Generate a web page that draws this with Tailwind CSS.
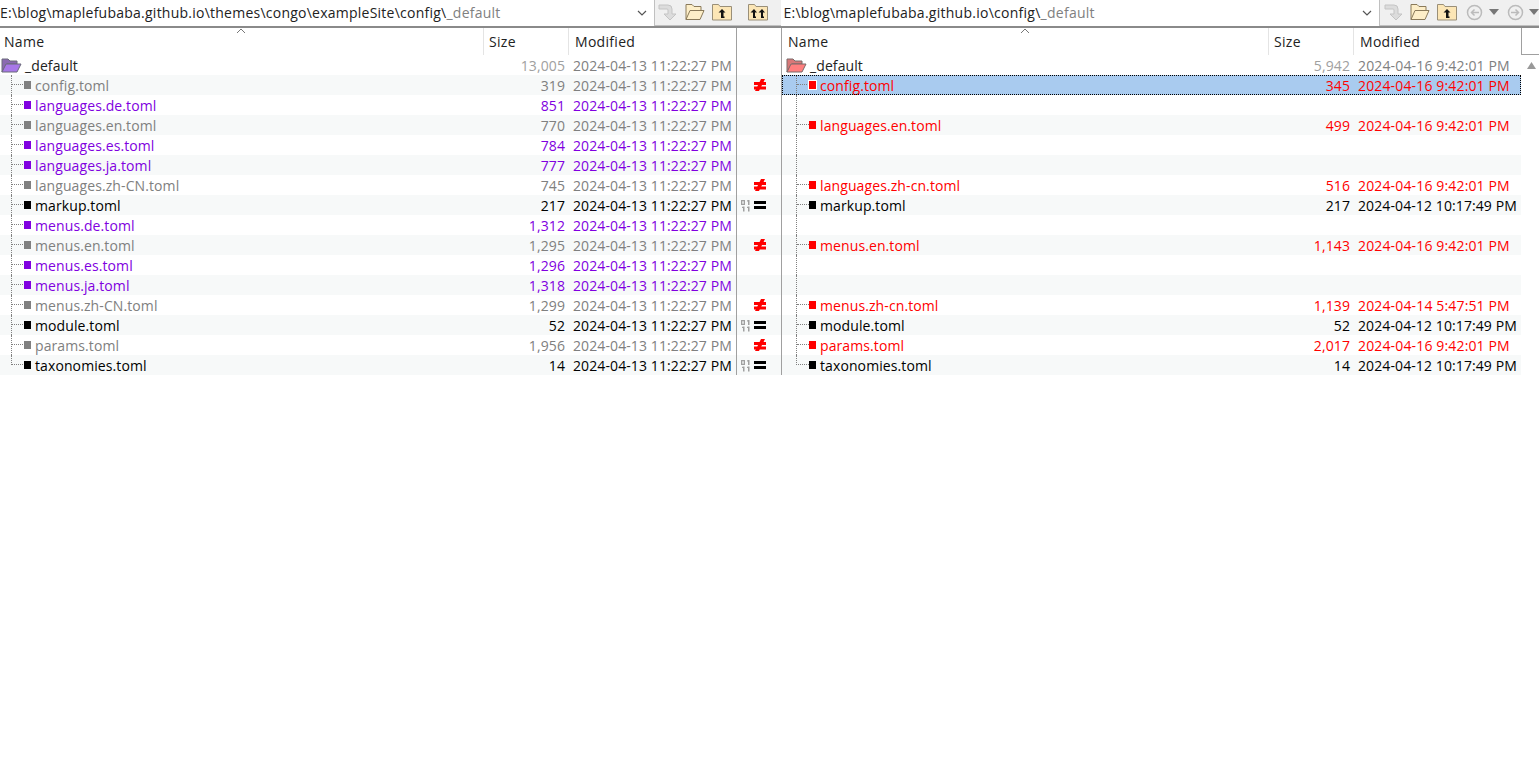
<!DOCTYPE html>
<html><head><meta charset="utf-8"><script src="https://cdn.jsdelivr.net/npm/@tailwindcss/browser@4"></script></head>
<body class="bg-white overflow-hidden">
<div class="w-[1539px] h-[763px] flex flex-col bg-white font-['Open_Sans','Noto_Sans',sans-serif] text-[14px] tracking-[0.1px] text-black">
  <!-- top bar -->
  <div class="flex h-[28px] bg-[#f0f0f0] border-b-2 border-[#8a8a8a] shrink-0">
    <div class="w-[655px] bg-white border-r border-[#c0c0c0] flex items-center justify-between pr-[7px] pb-px h-[26px]"><span class="text-[#222] tracking-[0.24px]">E:\blog\maplefubaba.github.io\themes\congo\exampleSite\config\<span class="text-[#808080]">_default</span></span>
      <svg width="10" height="6" viewBox="0 0 10 6"><path d="M1 1l4 4 4-4" fill="none" stroke="#555" stroke-width="1.2"/></svg></div>
    <div class="w-[127px] flex items-center pl-[3px] pb-px h-[26px] border-b border-[#c0c0c0]">
      <svg width="20" height="20" viewBox="0 0 20 20"><path d="M1 3h9a4 4 0 0 1 4 4v5h4l-6 6-6-6h4V8a1 1 0 0 0-1-1H1z" fill="#dcdcdc" stroke="#c4c4c4"/></svg>
      <svg class="ml-[7px]" width="20" height="18" viewBox="0 0 20 18"><path d="M1 16.500V1.500h6l2 2h7v4H5L1 16.500zm0 0h14l4-9H5" fill="#fdeec8" stroke="#8a7a5a"/></svg>
      <svg class="ml-[7px]" width="20" height="18" viewBox="0 0 20 18"><path d="M.5 17V1.500h6l1.500 2h11.500V17z" fill="#fce6b6" stroke="#9a8f78"/><path d="M10 6l-3.500 3.500H9V15h3.500v-1.500H11.500V9.500h2z" fill="#111"/></svg>
      <svg class="ml-[16px]" width="20" height="18" viewBox="0 0 20 18"><path d="M.5 17V1.500h6l1.500 2h11.500V17z" fill="#fce6b6" stroke="#9a8f78"/><path d="M6 6L2.500 9.500H5V15h3v-1.500H7V9.500h2zM14 6l-3.500 3.500H13V15h3v-1.500h-1V9.500h2z" fill="#111"/></svg>
    </div>
    <div class="w-[599px] bg-white border-r border-[#c0c0c0] flex items-center justify-between pl-[2px] pr-[7px] pb-px h-[26px]"><span class="text-[#222] tracking-[0.26px]">E:\blog\maplefubaba.github.io\config\<span class="text-[#808080]">_default</span></span>
      <svg width="10" height="6" viewBox="0 0 10 6"><path d="M1 1l4 4 4-4" fill="none" stroke="#555" stroke-width="1.2"/></svg></div>
    <div class="flex-1 flex items-center pl-[4px] pb-px h-[26px] border-b border-[#c0c0c0]">
      <svg width="20" height="20" viewBox="0 0 20 20"><path d="M1 3h9a4 4 0 0 1 4 4v5h4l-6 6-6-6h4V8a1 1 0 0 0-1-1H1z" fill="#dcdcdc" stroke="#c4c4c4"/></svg>
      <svg class="ml-[6px]" width="20" height="18" viewBox="0 0 20 18"><path d="M1 16.500V1.500h6l2 2h7v4H5L1 16.500zm0 0h14l4-9H5" fill="#fdeec8" stroke="#8a7a5a"/></svg>
      <svg class="ml-[7px]" width="20" height="18" viewBox="0 0 20 18"><path d="M.5 17V1.500h6l1.500 2h11.500V17z" fill="#fce6b6" stroke="#9a8f78"/><path d="M10 6l-3.500 3.500H9V15h3.500v-1.500H11.500V9.500h2z" fill="#111"/></svg>
      <svg class="ml-[9px]" width="17" height="17" viewBox="0 0 17 17"><circle cx="8.500" cy="8.500" r="7" fill="none" stroke="#bbb" stroke-width="1.500"/><path d="M13 8.500H6M8.500 5.500l-3 3 3 3" fill="none" stroke="#bbb" stroke-width="1.500"/></svg>
      <svg class="ml-[6px]" width="10" height="6" viewBox="0 0 10 6"><path d="M0 0h10L5 6z" fill="#777"/></svg>
      <svg class="ml-[8px]" width="17" height="17" viewBox="0 0 17 17"><circle cx="8.500" cy="8.500" r="7" fill="none" stroke="#bbb" stroke-width="1.500"/><path d="M4 8.500h7M8.500 5.500l3 3-3 3" fill="none" stroke="#bbb" stroke-width="1.500"/></svg>
      <svg class="ml-[5px] shrink-0" width="10" height="6" viewBox="0 0 10 6"><path d="M0 0h10L5 6z" fill="#777"/></svg>
    </div>
  </div>
  <div class="flex">
    <!-- left pane -->
    <div class="w-[737px] border-r border-[#a0a0a0] shrink-0">
      <div class="relative flex h-[27px] items-center text-[#222] tracking-[0.3px]">
        <span class="w-[484px] pl-[4px] border-r border-[#e4e4e4] h-full flex items-center">Name</span>
        <span class="w-[85px] pl-[5px] border-r border-[#e4e4e4] h-full flex items-center">Size</span>
        <span class="pl-[6px]">Modified</span>
        <svg class="absolute left-[236px] top-0" width="10" height="6" viewBox="0 0 10 6"><path d="M1 5l4-4 4 4" fill="none" stroke="#777"/></svg>
      </div>
      <div class="flex h-5 items-center text-[#222]"><svg class="ml-[1px] mr-[3px]" width="21" height="16" viewBox="0 0 21 16"><path d="M1 15V2h6l2 2h7v3H6z" fill="#8a6ab0" stroke="#6a6a7a"/><path d="M1 15l4-8h15l-4 8z" fill="#a878e8" stroke="#6a6a7a"/></svg><span class="flex-1">_default</span><span class="w-[60px] text-right text-[#a0a0a0]">13,005</span><span class="ml-2 w-[163px] text-[#808080]">2024-04-13 11:22:27 PM</span></div>
      <div class="flex h-5 items-center bg-[#f7f9f9] text-[#808080]"><span class="ml-[11px] w-[12px] h-5 border-l border-dotted border-[#808080]"><span class="block h-[10px] border-b border-dotted border-[#808080]"></span></span><span class="ml-px w-[7px] h-2 bg-[#808080]"></span><span class="ml-[4px] flex-1">config.toml</span><span class="w-[60px] text-right">319</span><span class="ml-2 w-[163px]">2024-04-13 11:22:27 PM</span></div>
      <div class="flex h-5 items-center text-[#8000e0]"><span class="ml-[11px] w-[12px] h-5 border-l border-dotted border-[#808080]"><span class="block h-[10px] border-b border-dotted border-[#808080]"></span></span><span class="ml-px w-[7px] h-2 bg-[#8000e0]"></span><span class="ml-[4px] flex-1">languages.de.toml</span><span class="w-[60px] text-right">851</span><span class="ml-2 w-[163px]">2024-04-13 11:22:27 PM</span></div>
      <div class="flex h-5 items-center bg-[#f7f9f9] text-[#808080]"><span class="ml-[11px] w-[12px] h-5 border-l border-dotted border-[#808080]"><span class="block h-[10px] border-b border-dotted border-[#808080]"></span></span><span class="ml-px w-[7px] h-2 bg-[#808080]"></span><span class="ml-[4px] flex-1">languages.en.toml</span><span class="w-[60px] text-right">770</span><span class="ml-2 w-[163px]">2024-04-13 11:22:27 PM</span></div>
      <div class="flex h-5 items-center text-[#8000e0]"><span class="ml-[11px] w-[12px] h-5 border-l border-dotted border-[#808080]"><span class="block h-[10px] border-b border-dotted border-[#808080]"></span></span><span class="ml-px w-[7px] h-2 bg-[#8000e0]"></span><span class="ml-[4px] flex-1">languages.es.toml</span><span class="w-[60px] text-right">784</span><span class="ml-2 w-[163px]">2024-04-13 11:22:27 PM</span></div>
      <div class="flex h-5 items-center bg-[#f7f9f9] text-[#8000e0]"><span class="ml-[11px] w-[12px] h-5 border-l border-dotted border-[#808080]"><span class="block h-[10px] border-b border-dotted border-[#808080]"></span></span><span class="ml-px w-[7px] h-2 bg-[#8000e0]"></span><span class="ml-[4px] flex-1">languages.ja.toml</span><span class="w-[60px] text-right">777</span><span class="ml-2 w-[163px]">2024-04-13 11:22:27 PM</span></div>
      <div class="flex h-5 items-center text-[#808080]"><span class="ml-[11px] w-[12px] h-5 border-l border-dotted border-[#808080]"><span class="block h-[10px] border-b border-dotted border-[#808080]"></span></span><span class="ml-px w-[7px] h-2 bg-[#808080]"></span><span class="ml-[4px] flex-1">languages.zh-CN.toml</span><span class="w-[60px] text-right">745</span><span class="ml-2 w-[163px]">2024-04-13 11:22:27 PM</span></div>
      <div class="flex h-5 items-center bg-[#f7f9f9] text-black"><span class="ml-[11px] w-[12px] h-5 border-l border-dotted border-[#808080]"><span class="block h-[10px] border-b border-dotted border-[#808080]"></span></span><span class="ml-px w-[7px] h-2 bg-black"></span><span class="ml-[4px] flex-1">markup.toml</span><span class="w-[60px] text-right">217</span><span class="ml-2 w-[163px]">2024-04-13 11:22:27 PM</span></div>
      <div class="flex h-5 items-center text-[#8000e0]"><span class="ml-[11px] w-[12px] h-5 border-l border-dotted border-[#808080]"><span class="block h-[10px] border-b border-dotted border-[#808080]"></span></span><span class="ml-px w-[7px] h-2 bg-[#8000e0]"></span><span class="ml-[4px] flex-1">menus.de.toml</span><span class="w-[60px] text-right">1,312</span><span class="ml-2 w-[163px]">2024-04-13 11:22:27 PM</span></div>
      <div class="flex h-5 items-center bg-[#f7f9f9] text-[#808080]"><span class="ml-[11px] w-[12px] h-5 border-l border-dotted border-[#808080]"><span class="block h-[10px] border-b border-dotted border-[#808080]"></span></span><span class="ml-px w-[7px] h-2 bg-[#808080]"></span><span class="ml-[4px] flex-1">menus.en.toml</span><span class="w-[60px] text-right">1,295</span><span class="ml-2 w-[163px]">2024-04-13 11:22:27 PM</span></div>
      <div class="flex h-5 items-center text-[#8000e0]"><span class="ml-[11px] w-[12px] h-5 border-l border-dotted border-[#808080]"><span class="block h-[10px] border-b border-dotted border-[#808080]"></span></span><span class="ml-px w-[7px] h-2 bg-[#8000e0]"></span><span class="ml-[4px] flex-1">menus.es.toml</span><span class="w-[60px] text-right">1,296</span><span class="ml-2 w-[163px]">2024-04-13 11:22:27 PM</span></div>
      <div class="flex h-5 items-center bg-[#f7f9f9] text-[#8000e0]"><span class="ml-[11px] w-[12px] h-5 border-l border-dotted border-[#808080]"><span class="block h-[10px] border-b border-dotted border-[#808080]"></span></span><span class="ml-px w-[7px] h-2 bg-[#8000e0]"></span><span class="ml-[4px] flex-1">menus.ja.toml</span><span class="w-[60px] text-right">1,318</span><span class="ml-2 w-[163px]">2024-04-13 11:22:27 PM</span></div>
      <div class="flex h-5 items-center text-[#808080]"><span class="ml-[11px] w-[12px] h-5 border-l border-dotted border-[#808080]"><span class="block h-[10px] border-b border-dotted border-[#808080]"></span></span><span class="ml-px w-[7px] h-2 bg-[#808080]"></span><span class="ml-[4px] flex-1">menus.zh-CN.toml</span><span class="w-[60px] text-right">1,299</span><span class="ml-2 w-[163px]">2024-04-13 11:22:27 PM</span></div>
      <div class="flex h-5 items-center bg-[#f7f9f9] text-black"><span class="ml-[11px] w-[12px] h-5 border-l border-dotted border-[#808080]"><span class="block h-[10px] border-b border-dotted border-[#808080]"></span></span><span class="ml-px w-[7px] h-2 bg-black"></span><span class="ml-[4px] flex-1">module.toml</span><span class="w-[60px] text-right">52</span><span class="ml-2 w-[163px]">2024-04-13 11:22:27 PM</span></div>
      <div class="flex h-5 items-center text-[#808080]"><span class="ml-[11px] w-[12px] h-5 border-l border-dotted border-[#808080]"><span class="block h-[10px] border-b border-dotted border-[#808080]"></span></span><span class="ml-px w-[7px] h-2 bg-[#808080]"></span><span class="ml-[4px] flex-1">params.toml</span><span class="w-[60px] text-right">1,956</span><span class="ml-2 w-[163px]">2024-04-13 11:22:27 PM</span></div>
      <div class="flex h-5 items-center bg-[#f7f9f9] text-black"><span class="ml-[11px] w-[12px] h-5 self-start"><span class="block h-[10px] border-l border-b border-dotted border-[#808080]"></span></span><span class="ml-px w-[7px] h-2 bg-black"></span><span class="ml-[4px] flex-1">taxonomies.toml</span><span class="w-[60px] text-right">14</span><span class="ml-2 w-[163px]">2024-04-13 11:22:27 PM</span></div>
    </div>
    <!-- middle -->
    <div class="w-[45px] border-r border-[#a0a0a0] shrink-0 flex flex-col">
      <div class="h-[47px]"></div>
      <div class="h-5 bg-[#f7f9f9] flex items-center pl-[17px]"><svg width="12" height="12" viewBox="0 0 12 12"><path d="M0 3h12v3H0zM0 7.500h12v3H0zM7 0h4L5 12H1z" fill="#f00"/></svg></div>
      <div class="h-5"></div><div class="h-5 bg-[#f7f9f9]"></div><div class="h-5"></div><div class="h-5 bg-[#f7f9f9]"></div>
      <div class="h-5 flex items-center pl-[17px]"><svg width="12" height="12" viewBox="0 0 12 12"><path d="M0 3h12v3H0zM0 7.500h12v3H0zM7 0h4L5 12H1z" fill="#f00"/></svg></div>
      <div class="h-5 bg-[#f7f9f9] flex items-center pl-[4px] gap-[3px]"><svg width="10" height="13" viewBox="0 0 10 13"><path d="M0 1h4v5H0zM1.300 2.200v2.600h1.400V2.200zM6 1.500L7 1h1.500v5H7V2.500H6zM1 8l1-.5h1.500v5H2V9H1zM6 8l1-.5h1.500v5H7V9H6z" fill="#a0a0a0" fill-rule="evenodd"/></svg><svg width="12" height="8" viewBox="0 0 12 8"><path d="M0 0h12v3H0zM0 5h12v3H0z" fill="#000"/></svg></div>
      <div class="h-5"></div>
      <div class="h-5 bg-[#f7f9f9] flex items-center pl-[17px]"><svg width="12" height="12" viewBox="0 0 12 12"><path d="M0 3h12v3H0zM0 7.500h12v3H0zM7 0h4L5 12H1z" fill="#f00"/></svg></div>
      <div class="h-5"></div><div class="h-5 bg-[#f7f9f9]"></div>
      <div class="h-5 flex items-center pl-[17px]"><svg width="12" height="12" viewBox="0 0 12 12"><path d="M0 3h12v3H0zM0 7.500h12v3H0zM7 0h4L5 12H1z" fill="#f00"/></svg></div>
      <div class="h-5 bg-[#f7f9f9] flex items-center pl-[4px] gap-[3px]"><svg width="10" height="13" viewBox="0 0 10 13"><path d="M0 1h4v5H0zM1.300 2.200v2.600h1.400V2.200zM6 1.500L7 1h1.500v5H7V2.500H6zM1 8l1-.5h1.500v5H2V9H1zM6 8l1-.5h1.500v5H7V9H6z" fill="#a0a0a0" fill-rule="evenodd"/></svg><svg width="12" height="8" viewBox="0 0 12 8"><path d="M0 0h12v3H0zM0 5h12v3H0z" fill="#000"/></svg></div>
      <div class="h-5 flex items-center pl-[17px]"><svg width="12" height="12" viewBox="0 0 12 12"><path d="M0 3h12v3H0zM0 7.500h12v3H0zM7 0h4L5 12H1z" fill="#f00"/></svg></div>
      <div class="h-5 bg-[#f7f9f9] flex items-center pl-[4px] gap-[3px]"><svg width="10" height="13" viewBox="0 0 10 13"><path d="M0 1h4v5H0zM1.300 2.200v2.600h1.400V2.200zM6 1.500L7 1h1.500v5H7V2.500H6zM1 8l1-.5h1.500v5H2V9H1zM6 8l1-.5h1.500v5H7V9H6z" fill="#a0a0a0" fill-rule="evenodd"/></svg><svg width="12" height="8" viewBox="0 0 12 8"><path d="M0 0h12v3H0zM0 5h12v3H0z" fill="#000"/></svg></div>
    </div>
    <!-- right pane -->
    <div class="w-[739px] shrink-0">
      <div class="relative flex h-[27px] items-center text-[#222] tracking-[0.3px]">
        <span class="w-[487px] pl-[6px] border-r border-[#e4e4e4] h-full flex items-center">Name</span>
        <span class="w-[85px] pl-[5px] border-r border-[#e4e4e4] h-full flex items-center">Size</span>
        <span class="pl-[6px]">Modified</span>
        <svg class="absolute left-[238px] top-0" width="10" height="6" viewBox="0 0 10 6"><path d="M1 5l4-4 4 4" fill="none" stroke="#777"/></svg>
      </div>
      <div class="flex h-5 items-center text-[#222]"><svg class="ml-[4px] mr-[3px]" width="21" height="16" viewBox="0 0 21 16"><path d="M1 15V2h6l2 2h7v3H6z" fill="#d87878" stroke="#7a6a6a"/><path d="M1 15l4-8h15l-4 8z" fill="#ff7f7f" stroke="#7a6a6a"/></svg><span class="flex-1">_default</span><span class="w-[60px] text-right text-[#a0a0a0]">5,942</span><span class="ml-2 w-[163px] text-[#808080] tracking-[0.15px]">2024-04-16 9:42:01 PM</span></div>
      <div class="flex h-5 items-center bg-[#a9cbef] text-[#f00] outline-1 outline-dotted -outline-offset-1 outline-black"><span class="ml-[14px] w-[13px] h-5 border-l border-dotted border-[#808080]"><span class="block h-[10px] border-b border-dotted border-[#808080]"></span></span><span class="w-[7px] h-2 bg-[#f00] outline-1 outline-white"></span><span class="ml-[4px] flex-1">config.toml</span><span class="w-[60px] text-right">345</span><span class="ml-2 w-[163px] tracking-[0.15px]">2024-04-16 9:42:01 PM</span></div>
      <div class="flex h-5 items-center"><span class="ml-[14px] h-5 border-l border-dotted border-[#808080]"></span></div>
      <div class="flex h-5 items-center bg-[#f7f9f9] text-[#f00]"><span class="ml-[14px] w-[13px] h-5 border-l border-dotted border-[#808080]"><span class="block h-[10px] border-b border-dotted border-[#808080]"></span></span><span class="w-[7px] h-2 bg-[#f00]"></span><span class="ml-[4px] flex-1">languages.en.toml</span><span class="w-[60px] text-right">499</span><span class="ml-2 w-[163px] tracking-[0.15px]">2024-04-16 9:42:01 PM</span></div>
      <div class="flex h-5 items-center"><span class="ml-[14px] h-5 border-l border-dotted border-[#808080]"></span></div>
      <div class="flex h-5 items-center bg-[#f7f9f9]"><span class="ml-[14px] h-5 border-l border-dotted border-[#808080]"></span></div>
      <div class="flex h-5 items-center text-[#f00]"><span class="ml-[14px] w-[13px] h-5 border-l border-dotted border-[#808080]"><span class="block h-[10px] border-b border-dotted border-[#808080]"></span></span><span class="w-[7px] h-2 bg-[#f00]"></span><span class="ml-[4px] flex-1">languages.zh-cn.toml</span><span class="w-[60px] text-right">516</span><span class="ml-2 w-[163px] tracking-[0.15px]">2024-04-16 9:42:01 PM</span></div>
      <div class="flex h-5 items-center bg-[#f7f9f9] text-black"><span class="ml-[14px] w-[13px] h-5 border-l border-dotted border-[#808080]"><span class="block h-[10px] border-b border-dotted border-[#808080]"></span></span><span class="w-[7px] h-2 bg-black"></span><span class="ml-[4px] flex-1">markup.toml</span><span class="w-[60px] text-right">217</span><span class="ml-2 w-[163px]">2024-04-12 10:17:49 PM</span></div>
      <div class="flex h-5 items-center"><span class="ml-[14px] h-5 border-l border-dotted border-[#808080]"></span></div>
      <div class="flex h-5 items-center bg-[#f7f9f9] text-[#f00]"><span class="ml-[14px] w-[13px] h-5 border-l border-dotted border-[#808080]"><span class="block h-[10px] border-b border-dotted border-[#808080]"></span></span><span class="w-[7px] h-2 bg-[#f00]"></span><span class="ml-[4px] flex-1">menus.en.toml</span><span class="w-[60px] text-right">1,143</span><span class="ml-2 w-[163px] tracking-[0.15px]">2024-04-16 9:42:01 PM</span></div>
      <div class="flex h-5 items-center"><span class="ml-[14px] h-5 border-l border-dotted border-[#808080]"></span></div>
      <div class="flex h-5 items-center bg-[#f7f9f9]"><span class="ml-[14px] h-5 border-l border-dotted border-[#808080]"></span></div>
      <div class="flex h-5 items-center text-[#f00]"><span class="ml-[14px] w-[13px] h-5 border-l border-dotted border-[#808080]"><span class="block h-[10px] border-b border-dotted border-[#808080]"></span></span><span class="w-[7px] h-2 bg-[#f00]"></span><span class="ml-[4px] flex-1">menus.zh-cn.toml</span><span class="w-[60px] text-right">1,139</span><span class="ml-2 w-[163px] tracking-[0.15px]">2024-04-14 5:47:51 PM</span></div>
      <div class="flex h-5 items-center bg-[#f7f9f9] text-black"><span class="ml-[14px] w-[13px] h-5 border-l border-dotted border-[#808080]"><span class="block h-[10px] border-b border-dotted border-[#808080]"></span></span><span class="w-[7px] h-2 bg-black"></span><span class="ml-[4px] flex-1">module.toml</span><span class="w-[60px] text-right">52</span><span class="ml-2 w-[163px]">2024-04-12 10:17:49 PM</span></div>
      <div class="flex h-5 items-center text-[#f00]"><span class="ml-[14px] w-[13px] h-5 border-l border-dotted border-[#808080]"><span class="block h-[10px] border-b border-dotted border-[#808080]"></span></span><span class="w-[7px] h-2 bg-[#f00]"></span><span class="ml-[4px] flex-1">params.toml</span><span class="w-[60px] text-right">2,017</span><span class="ml-2 w-[163px] tracking-[0.15px]">2024-04-16 9:42:01 PM</span></div>
      <div class="flex h-5 items-center bg-[#f7f9f9] text-black"><span class="ml-[14px] w-[13px] h-5 self-start"><span class="block h-[10px] border-l border-b border-dotted border-[#808080]"></span></span><span class="w-[7px] h-2 bg-black"></span><span class="ml-[4px] flex-1">taxonomies.toml</span><span class="w-[60px] text-right">14</span><span class="ml-2 w-[163px]">2024-04-12 10:17:49 PM</span></div>
    </div>
    <!-- scrollbar -->
    <div class="flex-1 flex flex-col">
      <div class="h-[27px] border-l border-b border-[#a0a0a0]"></div>
      <svg class="ml-[6px] mt-[7px]" width="9" height="7" viewBox="0 0 9 7"><path d="M4.500 0L9 7H0z" fill="#999"/></svg>
    </div>
  </div>
</div>
</body></html>
